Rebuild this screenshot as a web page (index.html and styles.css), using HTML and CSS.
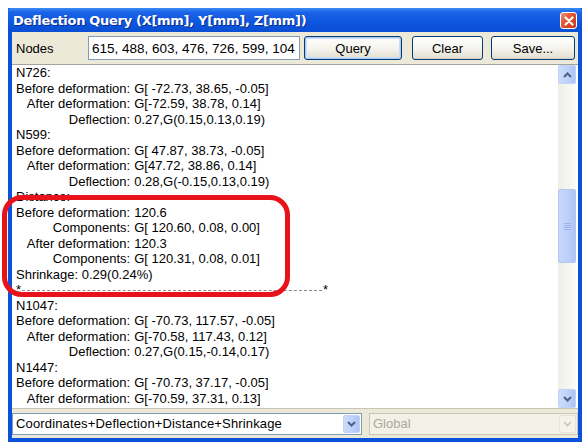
FILE: index.html
```html
<!DOCTYPE html>
<html>
<head>
<meta charset="utf-8">
<title>Deflection Query</title>
<link rel="stylesheet" href="styles.css">
</head>
<body>
<div class="window">
  <div class="titlebar">
    <span class="title">Deflection Query (X[mm], Y[mm], Z[mm])</span>
    <span class="close">
      <svg width="10" height="10" viewBox="0 0 10 10"><path d="M1.5 1.5 L8.5 8.5 M8.5 1.5 L1.5 8.5" stroke="#fff" stroke-width="2.2" stroke-linecap="round"/></svg>
    </span>
  </div>
  <div class="content">
    <div class="toolbar">
      <span class="label">Nodes</span>
      <div class="field">615, 488, 603, 476, 726, 599, 104</div>
      <button class="btn btn-default btn-query">Query</button>
      <button class="btn btn-clear">Clear</button>
      <button class="btn btn-save">Save...</button>
    </div>
    <div class="list">
      <div class="lines">
        <div class="head">N726:</div>
        <div class="row"><span class="k">Before deformation:</span><span class="v">G[ -72.73, 38.65, -0.05]</span></div>
        <div class="row"><span class="k">After deformation:</span><span class="v">G[-72.59, 38.78, 0.14]</span></div>
        <div class="row"><span class="k">Deflection:</span><span class="v">0.27,G(0.15,0.13,0.19)</span></div>
        <div class="head">N599:</div>
        <div class="row"><span class="k">Before deformation:</span><span class="v">G[ 47.87, 38.73, -0.05]</span></div>
        <div class="row"><span class="k">After deformation:</span><span class="v">G[47.72, 38.86, 0.14]</span></div>
        <div class="row"><span class="k">Deflection:</span><span class="v">0.28,G(-0.15,0.13,0.19)</span></div>
        <div class="head">Distance:</div>
        <div class="row"><span class="k">Before deformation:</span><span class="v">120.6</span></div>
        <div class="row"><span class="k">Components:</span><span class="v">G[ 120.60, 0.08, 0.00]</span></div>
        <div class="row"><span class="k">After deformation:</span><span class="v">120.3</span></div>
        <div class="row"><span class="k">Components:</span><span class="v">G[ 120.31, 0.08, 0.01]</span></div>
        <div class="head">Shrinkage: 0.29(0.24%)</div>
        <div class="sep"><span>*</span><span class="dots"></span><span>*</span></div>
        <div class="head">N1047:</div>
        <div class="row"><span class="k">Before deformation:</span><span class="v">G[ -70.73, 117.57, -0.05]</span></div>
        <div class="row"><span class="k">After deformation:</span><span class="v">G[-70.58, 117.43, 0.12]</span></div>
        <div class="row"><span class="k">Deflection:</span><span class="v">0.27,G(0.15,-0.14,0.17)</span></div>
        <div class="head">N1447:</div>
        <div class="row"><span class="k">Before deformation:</span><span class="v">G[ -70.73, 37.17, -0.05]</span></div>
        <div class="row"><span class="k">After deformation:</span><span class="v">G[-70.59, 37.31, 0.13]</span></div>
      </div>
      <div class="scrollbar">
        <div class="sb-btn">
          <svg width="9" height="6" viewBox="0 0 9 6"><path d="M1 5 L4.5 1.5 L8 5" fill="none" stroke="#4d6185" stroke-width="2"/></svg>
        </div>
        <div class="sb-track">
          <div class="sb-thumb">
            <svg width="7" height="8" viewBox="0 0 7 8"><path d="M0 1.5h7M0 3.5h7M0 5.5h7M0 7.5h7" stroke="#9db5ee" stroke-width="1"/></svg>
          </div>
        </div>
        <div class="sb-btn">
          <svg width="9" height="6" viewBox="0 0 9 6"><path d="M1 1 L4.5 4.5 L8 1" fill="none" stroke="#4d6185" stroke-width="2"/></svg>
        </div>
      </div>
    </div>
    <div class="bottom">
      <div class="combo combo-mode">
        <span class="combo-text">Coordinates+Deflection+Distance+Shrinkage</span>
        <span class="drop">
          <svg width="9" height="6" viewBox="0 0 9 6"><path d="M1 1 L4.5 4.5 L8 1" fill="none" stroke="#4d6185" stroke-width="2"/></svg>
        </span>
      </div>
      <div class="combo combo-frame disabled">
        <span class="combo-text">Global</span>
        <span class="drop">
          <svg width="9" height="6" viewBox="0 0 9 6"><path d="M1 1 L4.5 4.5 L8 1" fill="none" stroke="#c9c7ba" stroke-width="1.6"/></svg>
        </span>
      </div>
    </div>
  </div>
  <div class="highlight"></div>
</div>
</body>
</html>
```

FILE: styles.css
```css
html, body {
  margin: 0;
  padding: 0;
  background: #ffffff;
}

body {
  width: 582px;
  height: 442px;
  overflow: hidden;
  font-family: "Liberation Sans", Arial, sans-serif;
  font-size: 13px;
  color: #000;
}

.window {
  position: relative;
  margin: 8px 0 0 8px;
  width: 574px;
  height: 434px;
  display: flex;
  flex-direction: column;
  background: #0a52dc;
}

/* caption */
.titlebar {
  height: 24px;
  flex: none;
  display: flex;
  align-items: center;
  padding: 0 5px 0 5px;
  background: linear-gradient(#3a8cf6 0%, #1b63e6 18%, #0d56e0 60%, #0a4fd2 100%);
  border-radius: 3px 3px 0 0;
}

.title {
  flex: 1;
  color: #fff;
  font-family: "DejaVu Sans", sans-serif;
  font-weight: bold;
  font-size: 13px;
  letter-spacing: -0.3px;
  text-shadow: 1px 1px 0 #0a2a8c;
  white-space: nowrap;
}

.close {
  width: 15px;
  height: 15px;
  border: 1px solid #fff;
  border-radius: 3px;
  background: linear-gradient(135deg, #f09070 0%, #e0522c 45%, #c8361a 100%);
  display: flex;
  align-items: center;
  justify-content: center;
  margin-top: 1px;
}

/* client area */
.content {
  flex: 1;
  margin: 0 4px 4px 4px;
  background: #ece9d8;
  display: flex;
  flex-direction: column;
}

.toolbar {
  height: 32px;
  flex: none;
  display: flex;
  align-items: center;
  padding: 0 2px 0 4px;
}

.label {
  width: 72px;
  flex: none;
}

.field {
  width: 207px;
  height: 22px;
  flex: none;
  background: #fff;
  border: 1px solid #7f9db9;
  padding: 0 0 0 3px;
  display: flex;
  align-items: center;
  white-space: nowrap;
  overflow: hidden;
  font-size: 13.5px;
}

.btn {
  height: 24px;
  flex: none;
  font-family: "Liberation Sans", Arial, sans-serif;
  font-size: 13px;
  color: #000;
  border: 1px solid #003c74;
  border-radius: 3px;
  background: linear-gradient(#ffffff 0%, #f5f4ee 50%, #e6e3d6 90%, #d6d0c5 100%);
  padding: 0;
}

.btn-default {
  box-shadow: inset 0 0 0 1px #aec8f7, inset 0 0 0 2px #cddcf9;
}

.btn-query { width: 98px; margin-left: 4px; }
.btn-clear { width: 71px; margin-left: 10px; }
.btn-save  { width: 84px; margin-left: 8px; }

/* output list */
.list {
  flex: 1;
  display: flex;
  background: #fff;
  border-top: 1px solid #a6a39a;
  border-bottom: 1px solid #c9c6b8;
  overflow: hidden;
}

.lines {
  flex: 1;
  padding: 0 0 0 4px;
  line-height: 15.5px;
  white-space: nowrap;
  display: grid;
  grid-template-columns: max-content 1fr;
  align-content: start;
  overflow: hidden;
}

.head, .sep {
  grid-column: 1 / -1;
}

.row {
  display: contents;
}

.k {
  text-align: right;
}

.v {
  padding-left: 4px;
}

.sep {
  display: flex;
  align-items: center;
  width: 312px;
}

.sep .dots {
  flex: 1;
  border-top: 1px dashed #8a8a8a;
  margin: 2px 1px 0 1px;
}

.scrollbar {
  width: 18px;
  flex: none;
  margin-right: 2px;
  display: flex;
  flex-direction: column;
  background: #f6f5ef;
}

.sb-btn {
  height: 17px;
  flex: none;
  border: 1px solid #c1d2f7;
  border-radius: 2px;
  background: linear-gradient(90deg, #cddcfc 0%, #bdd0fb 60%, #aec4f6 100%);
  display: flex;
  align-items: center;
  justify-content: center;
}

.sb-track {
  flex: 1;
  display: flex;
  flex-direction: column;
  padding-top: 105px;
  background: linear-gradient(90deg, #f0efe6, #fbfbf8);
}

.sb-thumb {
  height: 72px;
  border: 1px solid #b3c7f2;
  border-radius: 2px;
  background: linear-gradient(90deg, #c8d8fb 0%, #bccffa 60%, #adc3f5 100%);
  display: flex;
  align-items: center;
  justify-content: center;
}

/* bottom selectors */
.bottom {
  height: 29px;
  flex: none;
  display: flex;
  align-items: center;
  gap: 7px;
}

.combo {
  height: 20px;
  border: 1px solid #7f9db9;
  background: #fff;
  display: flex;
  align-items: center;
  padding: 0 1px 0 3px;
}

.combo-mode {
  width: 344px;
}

.combo-frame {
  flex: 1;
}

.combo-text {
  flex: 1;
  white-space: nowrap;
}

.combo-mode .combo-text {
  letter-spacing: 0.15px;
}

.drop {
  width: 17px;
  height: 18px;
  border: 1px solid #c1d2f7;
  border-radius: 2px;
  box-sizing: border-box;
  background: linear-gradient(90deg, #cddcfc 0%, #bdd0fb 60%, #aec4f6 100%);
  display: flex;
  align-items: center;
  justify-content: center;
}

.disabled {
  border-color: #c9c7ba;
  background: #f2f1e8;
}

.disabled .combo-text {
  color: #aca899;
}

.disabled .drop {
  border-color: #e6e4da;
  background: #f4f3ec;
}

/* red annotation frame over the distance block */
.highlight {
  position: absolute;
  left: -6px;
  top: 187px;
  width: 278px;
  height: 92px;
  border: 5px solid #e8121a;
  border-radius: 20px;
}
```
